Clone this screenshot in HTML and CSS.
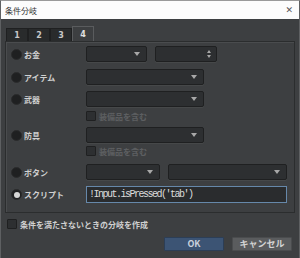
FILE: index.html
```html
<!DOCTYPE html>
<html lang="ja">

<head>
    <meta charset="UTF-8">
    <meta name="viewport" content="width=device-width, initial-scale=1.0">
    <title>条件分岐</title>
    <link rel="stylesheet" href="styles.css">
</head>

<body>
    <div class="window">
        <div class="titlebar">
            <span class="title">条件分岐</span>
            <span class="close">✕</span>
        </div>
        <div class="content">
            <div class="tabs">
                <div class="tab">1</div>
                <div class="tab">2</div>
                <div class="tab">3</div>
                <div class="tab active">4</div>
            </div>
            <div class="panel">
                <div class="row first">
                    <label class="option"><span class="radio"></span>お金</label>
                    <div class="select short"><span class="arrow"></span></div>
                    <div class="spin">
                        <span class="up"></span>
                        <span class="down"></span>
                    </div>
                </div>
                <div class="row r-item">
                    <label class="option"><span class="radio"></span>アイテム</label>
                    <div class="select"><span class="arrow"></span></div>
                </div>
                <div class="row r-weapon">
                    <label class="option"><span class="radio"></span>武器</label>
                    <div class="select"><span class="arrow"></span></div>
                </div>
                <div class="check-row c-weapon">
                    <span class="checkbox"></span>
                    <span class="disabled">装備品を含む</span>
                </div>
                <div class="row r-armor">
                    <label class="option"><span class="radio"></span>防具</label>
                    <div class="select"><span class="arrow"></span></div>
                </div>
                <div class="check-row c-armor">
                    <span class="checkbox"></span>
                    <span class="disabled">装備品を含む</span>
                </div>
                <div class="row r-button">
                    <label class="option"><span class="radio"></span>ボタン</label>
                    <div class="select button-sel"><span class="arrow"></span></div>
                    <div class="select button-sel2"><span class="arrow"></span></div>
                </div>
                <div class="row r-script">
                    <label class="option"><span class="radio checked"></span>スクリプト</label>
                    <div class="script-input">!Input.isPressed('tab')</div>
                </div>
            </div>
            <div class="else-row">
                <span class="checkbox"></span>
                <span>条件を満たさないときの分岐を作成</span>
            </div>
            <div class="buttons">
                <button class="ok">OK</button>
                <button class="cancel">キャンセル</button>
            </div>
        </div>
    </div>
</body>

</html>
```

FILE: styles.css
```css
body {
    margin: 0;
    padding: 0;
    background-color: #3d3f41;
    font-family: "Noto Sans CJK JP", "Noto Sans", sans-serif;
    color: #d2d2d2;
}

.window {
    width: 300px;
    height: 258px;
    box-sizing: border-box;
    border-top: 1px solid #9a9a9a;
    border-left: 1px solid #5e6062;
    border-right: 1px solid #5e6062;
    background-color: #3d3f41;
    overflow: hidden;
}

.titlebar {
    height: 18px;
    background-color: #fcfcfc;
    display: flex;
    align-items: center;
    justify-content: space-between;
    padding: 0 6px 0 4px;
}

.title {
    font-size: 8px;
    color: #333;
}

.close {
    font-family: "DejaVu Sans", sans-serif;
    font-size: 9px;
    color: #555;
}

.content {
    padding: 0 7px 0 4px;
}

.tabs {
    display: flex;
    align-items: flex-end;
    height: 22px;
    padding-left: 1px;
}

.tab {
    width: 22px;
    height: 13px;
    box-sizing: border-box;
    background-color: #292b2c;
    border: 1px solid #1f2021;
    border-bottom: none;
    font-family: "DejaVu Sans", sans-serif;
    font-weight: bold;
    font-size: 8px;
    color: #c8c8c8;
    display: flex;
    align-items: center;
    justify-content: center;
}

.tab.active {
    height: 15px;
    background-color: #3d3f41;
    border: 1px solid #5a5c5e;
    border-bottom: none;
    color: #e0e0e0;
}

.panel {
    width: 290px;
    height: 172px;
    box-sizing: border-box;
    border: 1px solid #2b2d2e;
    box-shadow: inset 1px 1px 0 #4a4c4e;
    padding: 4px 0 0 5px;
}

.row {
    display: flex;
    align-items: center;
    height: 16px;
}

.r-item { margin-top: 7px; }
.r-weapon { margin-top: 6px; }
.r-armor { margin-top: 6px; }
.r-button { margin-top: 8px; }
.r-script { margin-top: 6px; height: 17px; }

.option {
    width: 75px;
    display: flex;
    align-items: center;
    gap: 2px;
    font-size: 8px;
    font-weight: bold;
    color: #d0d0d0;
}

.radio {
    width: 11px;
    height: 11px;
    box-sizing: border-box;
    border-radius: 50%;
    background-color: #1f2021;
    border: 1px solid #2a2b2c;
    display: flex;
    align-items: center;
    justify-content: center;
}

.radio.checked::after {
    content: "";
    width: 6px;
    height: 6px;
    border-radius: 50%;
    background-color: #d6d6d6;
}

.select {
    width: 118px;
    height: 16px;
    box-sizing: border-box;
    background-color: #2d2f31;
    border: 1px solid #1f2021;
    border-radius: 2px;
    box-shadow: 0 1px 0 #464849;
    display: flex;
    align-items: center;
    justify-content: flex-end;
    padding-right: 6px;
}

.select.short {
    width: 61px;
}

.select.button-sel {
    width: 74px;
}

.select.button-sel2 {
    width: 119px;
    margin-left: 8px;
}

.arrow {
    width: 0;
    height: 0;
    border-left: 3px solid transparent;
    border-right: 3px solid transparent;
    border-top: 4px solid #a8a8a8;
}

.spin {
    width: 62px;
    height: 16px;
    margin-left: 8px;
    box-sizing: border-box;
    background-color: #2d2f31;
    border: 1px solid #1f2021;
    border-radius: 2px;
    box-shadow: 0 1px 0 #464849;
    display: flex;
    flex-direction: column;
    align-items: flex-end;
    justify-content: center;
    gap: 2px;
    padding-right: 5px;
}

.spin .up {
    width: 0;
    height: 0;
    border-left: 2px solid transparent;
    border-right: 2px solid transparent;
    border-bottom: 3px solid #a8a8a8;
}

.spin .down {
    width: 0;
    height: 0;
    border-left: 2px solid transparent;
    border-right: 2px solid transparent;
    border-top: 3px solid #a8a8a8;
}

.check-row {
    display: flex;
    align-items: center;
    gap: 3px;
    height: 10px;
    padding-left: 75px;
    font-size: 8px;
}

.c-weapon { margin-top: 4px; }
.c-armor { margin-top: 3px; }

.checkbox {
    width: 10px;
    height: 10px;
    box-sizing: border-box;
    background-color: #2d2f31;
    border: 1px solid #1f2021;
    border-radius: 1px;
}

.disabled {
    color: #5d5f61;
    font-weight: bold;
}

.script-input {
    width: 201px;
    height: 17px;
    box-sizing: border-box;
    background-color: #2a2c2e;
    border: 1px solid #6688aa;
    padding-left: 2px;
    font-family: "Liberation Mono", monospace;
    font-size: 10px;
    letter-spacing: -1.5px;
    line-height: 15px;
    color: #dcdcdc;
}

.else-row {
    display: flex;
    align-items: center;
    gap: 3px;
    margin-top: 6px;
    margin-left: 2px;
    height: 10px;
    font-size: 8px;
    font-weight: bold;
    color: #d0d0d0;
}

.buttons {
    display: flex;
    justify-content: flex-end;
    gap: 8px;
    margin-top: 8px;
}

button {
    width: 60px;
    height: 14px;
    padding: 0;
    border-radius: 1px;
    font-family: "Noto Sans CJK JP", "Noto Sans", sans-serif;
    font-size: 9px;
    font-weight: bold;
    line-height: 12px;
    cursor: pointer;
}

.ok {
    background-color: #3c5474;
    border: 1px solid #2c3e56;
    color: #c8d0dc;
}

.cancel {
    background-color: #5a5c5e;
    border: 1px solid #4a4c4e;
    color: #d4d4d4;
}
```
